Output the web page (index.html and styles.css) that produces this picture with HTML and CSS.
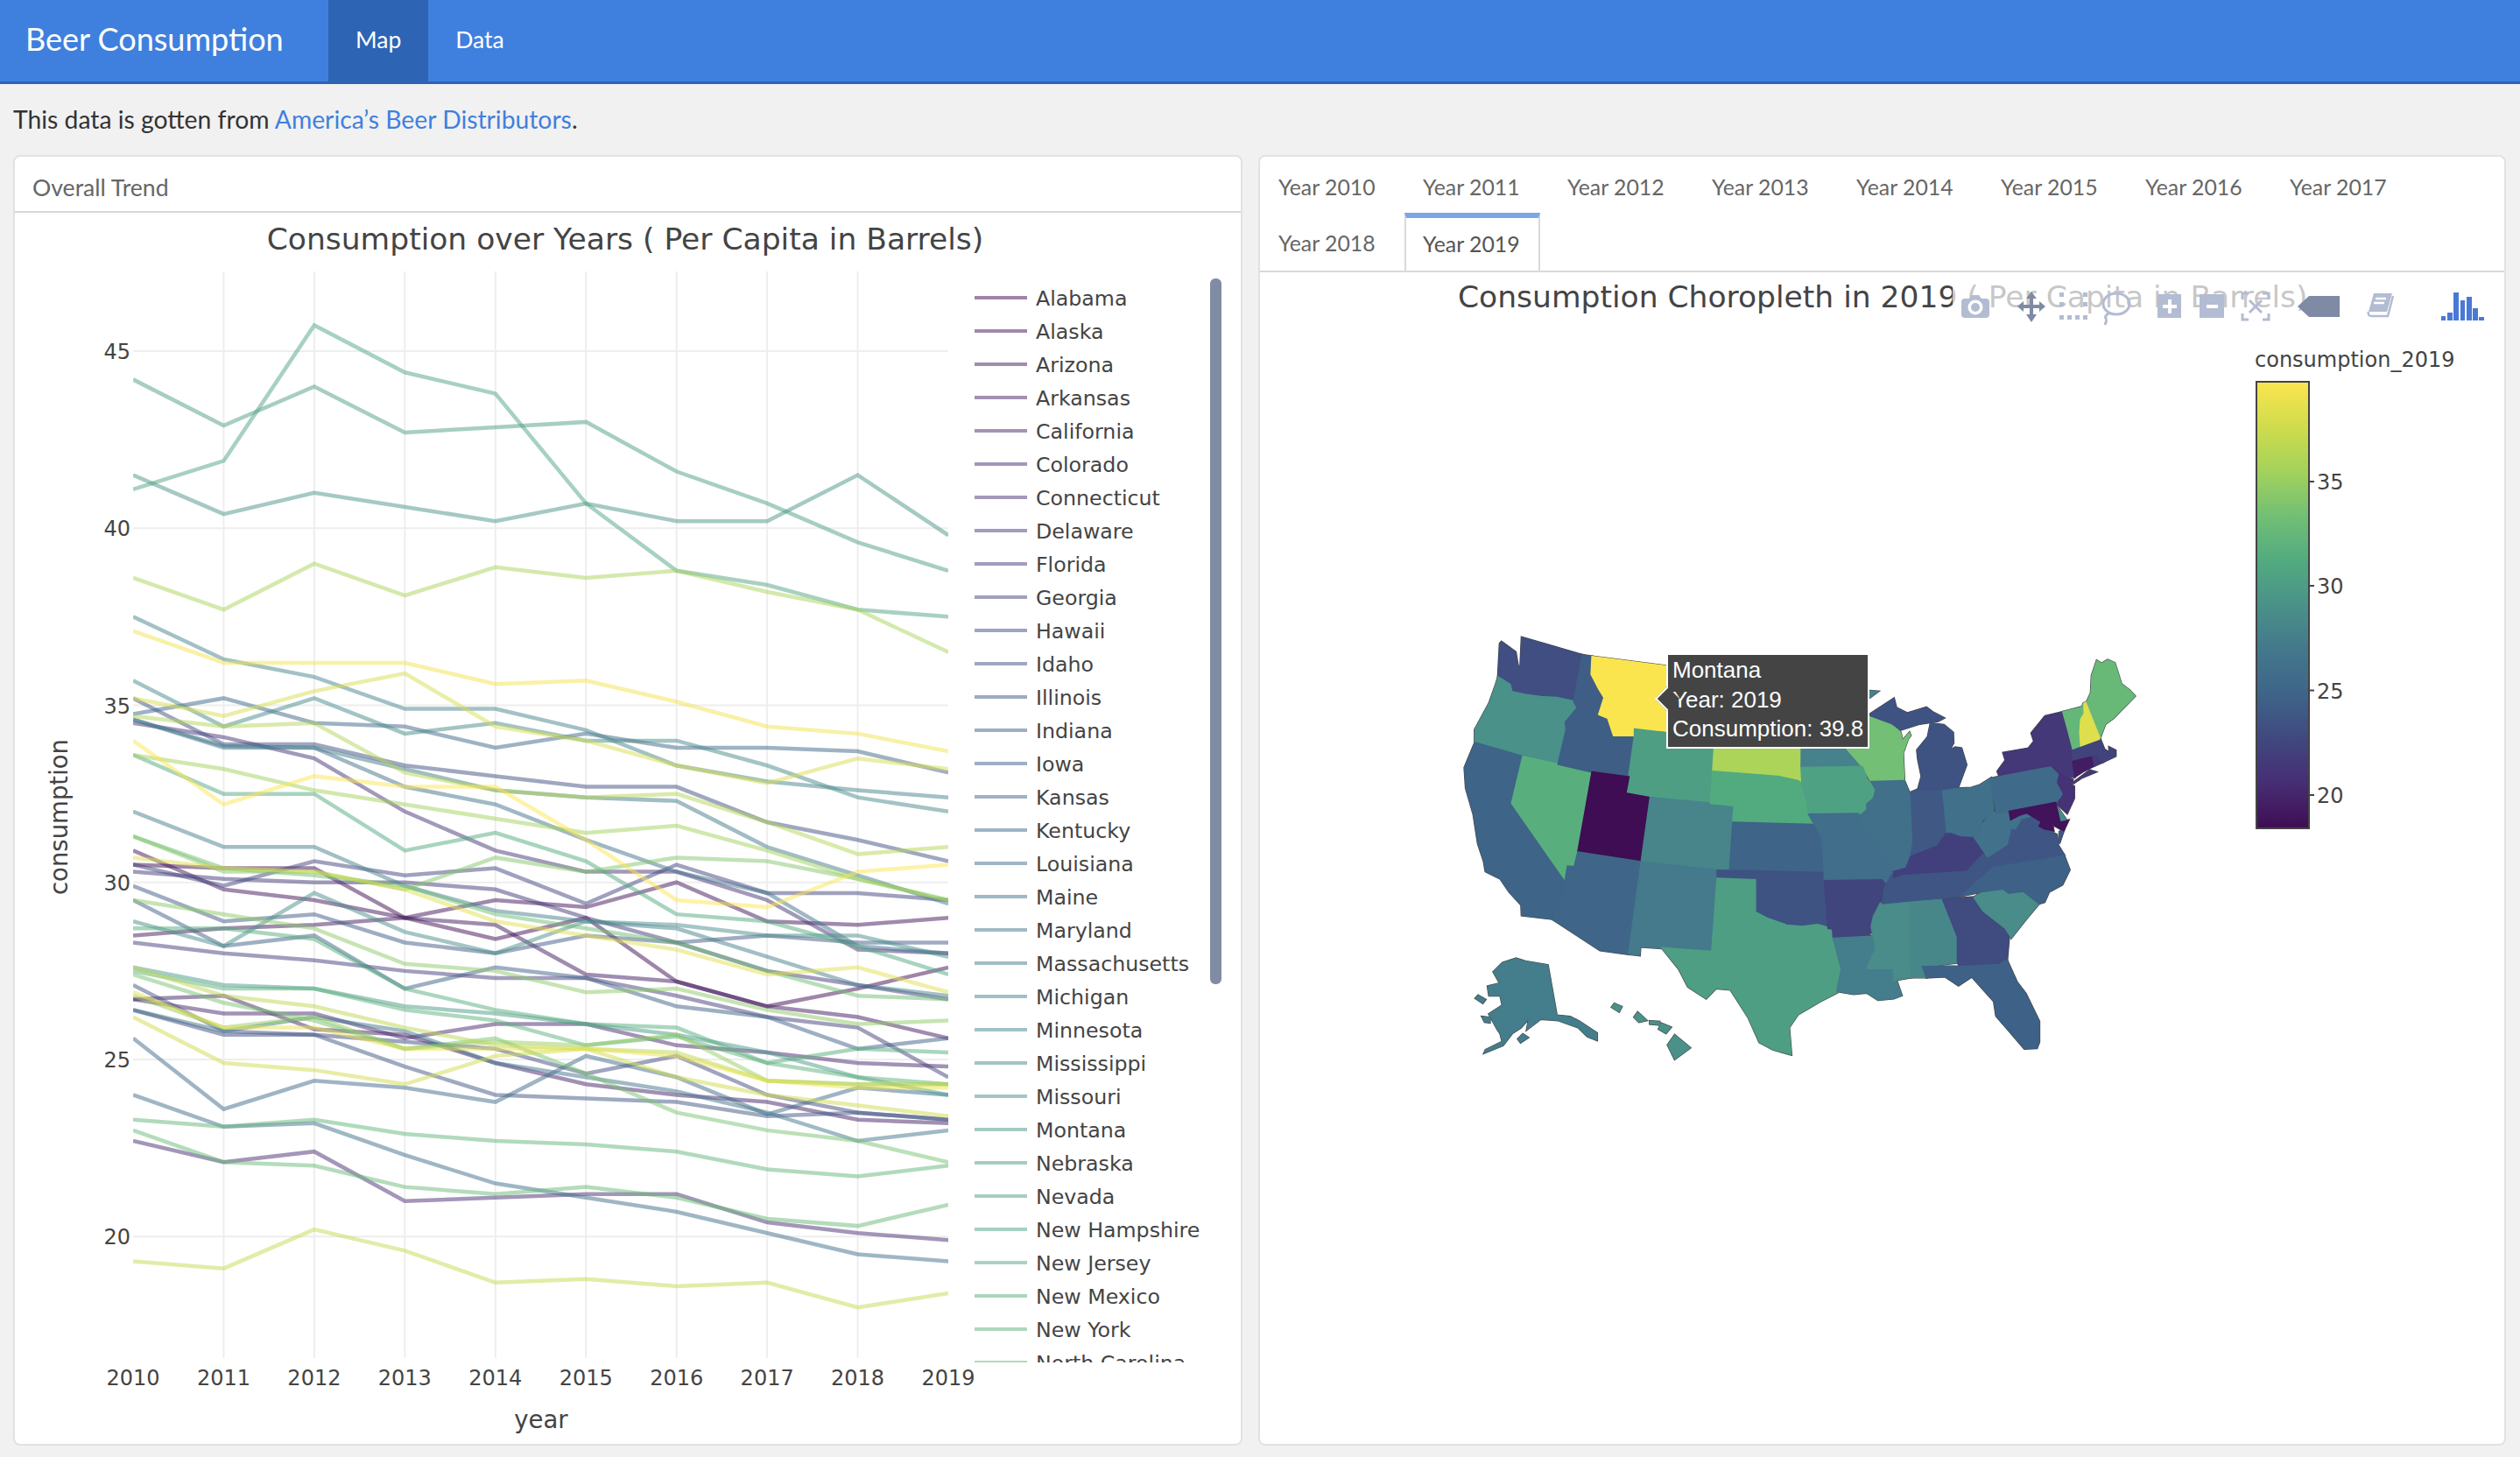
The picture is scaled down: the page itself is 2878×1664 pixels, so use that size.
FILE: index.html
```html
<!DOCTYPE html>
<html lang="en">
<head>
    <meta charset="UTF-8">
    <title>Beer Consumption</title>
    <link rel="stylesheet" href="styles.css">
</head>
<body>

    <nav class="navbar">
        <span class="brand">Beer Consumption</span>
        <a class="nav-link active">Map</a>
        <a class="nav-link">Data</a>
    </nav>

    <p class="intro">This data is gotten from <a>America’s Beer Distributors</a>.</p>

    <div class="cards">
        <section class="card">
            <div class="card-title">Overall Trend</div>
            <svg id="trend" class="plot" width="1400" height="1406" viewBox="17 243 1400 1406"></svg>
        </section>

        <section class="card card-map">
            <ul class="tabs">
                <li>Year 2010</li>
                <li>Year 2011</li>
                <li>Year 2012</li>
                <li>Year 2013</li>
                <li>Year 2014</li>
                <li>Year 2015</li>
                <li>Year 2016</li>
                <li>Year 2017</li>
                <li>Year 2018</li>
                <li class="active">Year 2019</li>
            </ul>

            <svg id="choropleth" class="plot" width="1421" height="1340" viewBox="1439 311 1421 1340">
                <defs>
                    <linearGradient id="viridis-bar" x1="0" y1="1" x2="0" y2="0"></linearGradient>
                </defs>
                <text class="plot-title" x="1665" y="351">Consumption Choropleth in 2019 ( Per Capita in Barrels)</text>
                <svg id="states" x="1650" y="700" width="800" height="520" viewBox="0 0 1568 1560" preserveAspectRatio="none"></svg>
                <text class="axis-text" x="2575" y="419">consumption_2019</text>
                <g id="colorbar"></g>

                <!-- modebar -->
                <rect x="2230" y="318" width="624" height="54" fill="#fff" fill-opacity="0.7"/>
                <g class="tool">
                    <path d="M2240 345a4 4 0 0 1 4-4h5l3-4h8l3 4h5a4 4 0 0 1 4 4v14a4 4 0 0 1-4 4h-24a4 4 0 0 1-4-4z"/>
                    <circle cx="2256" cy="351" r="8.5" fill="#fff"/>
                    <circle cx="2256" cy="351" r="5"/>
                </g>
                <path class="tool-on" d="M2320 333l6 8h-4v7h7v-4l7 6-7 6v-4h-7v7h4l-6 9-6-9h4v-7h-7v4l-7-6 7-6v4h7v-7h-4z"/>
                <g class="tool">
                    <path d="M2352 334h5v5h-5zM2379 334h5v5h-5zM2352 345h5v5h-5zM2379 345h5v5h-5zM2352 360h5v5h-5zM2361 360h5v5h-5zM2370 360h5v5h-5zM2379 360h5v5h-5z"/>
                </g>
                <g class="tool-line">
                    <ellipse cx="2417" cy="347" rx="15" ry="12"/>
                    <path d="M2410 357c-5 2-7 5-4 8M2406 365l-2 6"/>
                </g>
                <g class="tool">
                    <rect x="2464" y="336" width="27" height="27"/>
                    <path fill="#fff" d="M2476 342h4v6h6v4h-6v6h-4v-6h-6v-4h6z"/>
                </g>
                <g class="tool">
                    <rect x="2512" y="336" width="28" height="27"/>
                    <rect fill="#fff" x="2520" y="348" width="13" height="4"/>
                </g>
                <g class="tool-line">
                    <path d="M2561 342v-7h7M2584 335h7v7M2591 358v7h-7M2568 365h-7v-7M2569 343l14 14M2583 343l-14 14"/>
                </g>
                <path class="tool-on" d="M2624 350l13-12h35v24h-35z"/>
                <g class="tool">
                    <path d="M2711 335h21l-6 21h-21z"/>
                    <path class="tool-cut" d="M2705 359l22 0M2713 341h12M2711 346h12"/>
                    <path class="tool-edge" d="M2705 356c-1 3 0 5 4 5h18l6-23"/>
                </g>
                <g class="logo">
                    <rect x="2788" y="361" width="5" height="5"/>
                    <rect x="2795" y="357" width="6" height="9"/>
                    <rect x="2802" y="334" width="6" height="32"/>
                    <rect x="2810" y="343" width="5" height="23"/>
                    <rect x="2817" y="339" width="6" height="27"/>
                    <rect x="2824" y="352" width="6" height="14"/>
                    <rect x="2831" y="362" width="6" height="4"/>
                </g>
            </svg>

            <div class="hover-tip">
                <div>Montana</div>
                <div>Year: 2019</div>
                <div>Consumption: 39.8</div>
            </div>
        </section>
    </div>

    <script src="script.js"></script>
</body>
</html>
```

FILE: styles.css
```css
* {
    box-sizing: border-box;
}

body {
    margin: 0;
    background: #f1f1f1;
    color: #333;
    font-family: Lato, "Open Sans", sans-serif;
    font-size: 26px;
}

.navbar {
    display: flex;
    align-items: stretch;
    height: 96px;
    padding-left: 29px;
    background: #3f80de;
    border-bottom: 3px solid #2d64b4;
    color: #fff;
}

.brand {
    width: 346px;
    font-size: 36px;
    line-height: 88px;
}

.nav-link {
    padding: 0 31px;
    font-size: 26.5px;
    line-height: 91px;
}

.nav-link.active {
    background: #2d64b4;
}

.intro {
    height: 81px;
    margin: 0;
    padding: 20px 15px 0;
    font-size: 28.3px;
    line-height: 40px;
}

.intro a {
    color: #3f80de;
}

.cards {
    display: grid;
    grid-template-columns: 1404px 1425px;
    gap: 18px;
    padding-left: 15px;
}

.card {
    height: 1474px;
    background: #fff;
    border: 2px solid #e2e2e2;
    border-radius: 8px;
    overflow: hidden;
}

.card-map {
    position: relative;
}

.card-title {
    height: 64px;
    padding: 0 20px;
    border-bottom: 2px solid #d9d9d9;
    color: #666;
    font-size: 26.6px;
    line-height: 70px;
}

.plot {
    display: block;
}

.plot text {
    font-family: "DejaVu Sans", sans-serif;
    fill: #444;
}

.plot-title {
    font-size: 34.5px;
}

.axis-text {
    font-size: 24px;
}

.axis-title {
    font-size: 27.5px;
}

.legend-text {
    font-size: 23.7px;
}

.tabs {
    display: flex;
    flex-wrap: wrap;
    height: 132px;
    margin: 0;
    padding: 0;
    border-bottom: 2px solid #d9d9d9;
    list-style: none;
    color: #666;
    font-size: 24.8px;
}

.tabs li {
    width: 155px;
    height: 64px;
    margin-right: 10px;
    padding-left: 21px;
    line-height: 69px;
}

.tabs .active {
    height: 66px;
    padding-left: 19px;
    background: #fff;
    border: 2px solid #d9d9d9;
    border-top: 6px solid #7aa7e8;
    border-bottom: 0;
    color: #555;
    line-height: 59px;
}

.tool {
    fill: #b2bcd2;
}

.tool-on {
    fill: #7f8aa4;
}

.tool-line {
    fill: none;
    stroke: #b2bcd2;
    stroke-width: 3;
}

.tool-cut {
    fill: none;
    stroke: #fff;
    stroke-width: 2.5;
}

.tool-edge {
    fill: none;
    stroke: #b2bcd2;
    stroke-width: 2.5;
}

.logo {
    fill: #4a78d5;
}

.hover-tip {
    position: absolute;
    left: 464px;
    top: 567px;
    width: 232px;
    height: 109px;
    padding: 1px 0 0 5px;
    background: #444;
    border: 2px solid #fff;
    color: #fff;
    font-family: "Liberation Sans", sans-serif;
    font-size: 26px;
    line-height: 33.5px;
    white-space: nowrap;
}

.hover-tip::before {
    content: "";
    position: absolute;
    left: -11px;
    top: 40px;
    width: 18px;
    height: 18px;
    background: #444;
    border-left: 2px solid #fff;
    border-bottom: 2px solid #fff;
    transform: rotate(45deg);
}
```

FILE: script.js
```js
const SVG_NS = "http://www.w3.org/2000/svg";

function el(parent, name, attrs, text) {
    const node = document.createElementNS(SVG_NS, name);
    for (const key in attrs) node.setAttribute(key, attrs[key]);
    if (text !== undefined) node.textContent = text;
    parent.appendChild(node);
    return node;
}

// viridis as it looks on the colorbar
const viridis = ["#3f0d53", "#472d74", "#40487f", "#3e6488", "#43788c", "#4a9189", "#52ab7f", "#72bf75", "#a3d25b", "#d0dc4c", "#fbe54f"];

function mix(stops, t) {
    const pos = Math.min(Math.max(t, 0), 1) * (stops.length - 1);
    const i = Math.min(Math.floor(pos), stops.length - 2);
    const f = pos - i;
    const a = parseInt(stops[i].slice(1), 16);
    const b = parseInt(stops[i + 1].slice(1), 16);
    const part = shift => Math.round(((a >> shift) & 255) * (1 - f) + ((b >> shift) & 255) * f);
    return `rgb(${part(16)},${part(8)},${part(0)})`;
}

const consumption = [
    ["Alabama", [30.5, 30.4, 30.4, 29.0, 28.4, 29.0, 27.2, 26.5, 27.0, 27.6]],
    ["Alaska", [30.9, 29.8, 29.5, 29.0, 29.5, 29.3, 30.0, 28.9, 28.8, 29.0]],
    ["Arizona", [28.5, 28.7, 28.8, 29.0, 28.8, 27.4, 27.2, 26.5, 26.2, 25.6]],
    ["Arkansas", [26.7, 26.8, 25.85, 25.7, 24.9, 24.3, 24.0, 23.8, 23.3, 23.2]],
    ["California", [26.7, 26.3, 26.3, 25.6, 26.0, 26.0, 25.4, 25.2, 24.9, 24.8]],
    ["Colorado", [22.7, 22.1, 22.4, 21.0, 21.1, 21.2, 21.2, 20.4, 20.1, 19.9]],
    ["Connecticut", [34.5, 34.1, 33.5, 32.0, 30.9, 30.3, 30.3, 29.5, 28.1, 28.0]],
    ["Delaware", [30.3, 30.1, 30.0, 30.0, 29.8, 29.0, 28.3, 27.5, 27.1, 26.7]],
    ["Florida", [28.3, 28.0, 27.8, 27.5, 27.3, 27.3, 26.8, 26.2, 25.9, 24.5]],
    ["Georgia", [30.5, 29.9, 30.6, 30.2, 30.4, 29.4, 30.5, 29.7, 29.7, 29.5]],
    ["Hawaii", [26.4, 25.7, 25.7, 25.5, 25.3, 24.6, 25.1, 24.0, 23.5, 23.3]],
    ["Idaho", [35.2, 33.9, 33.9, 33.3, 33.0, 32.7, 32.7, 31.7, 31.2, 30.6]],
    ["Illinois", [27.1, 25.8, 25.7, 24.8, 24.0, 23.9, 23.8, 23.4, 23.5, 23.3]],
    ["Indiana", [29.9, 28.9, 29.1, 28.3, 28.0, 28.5, 28.3, 28.5, 28.3, 28.3]],
    ["Iowa", [29.5, 28.2, 28.5, 27.0, 27.6, 27.3, 26.5, 26.2, 25.3, 25.6]],
    ["Kansas", [34.75, 35.2, 34.5, 34.4, 33.8, 34.2, 33.8, 33.8, 33.7, 33.1]],
    ["Kentucky", [25.6, 23.6, 24.4, 24.2, 23.8, 25.1, 24.5, 23.45, 24.2, 24.0]],
    ["Louisiana", [24.0, 23.1, 23.2, 22.3, 21.5, 21.1, 20.7, 20.1, 19.5, 19.3]],
    ["Maine", [34.6, 33.85, 33.8, 32.7, 32.2, 31.2, 30.3, 29.7, 28.2, 28.0]],
    ["Maryland", [26.4, 25.8, 26.2, 25.8, 24.9, 24.5, 24.1, 23.5, 22.7, 23.0]],
    ["Massachusetts", [34.6, 33.8, 33.8, 33.2, 32.6, 32.4, 32.3, 31.0, 30.2, 29.4]],
    ["Michigan", [32.0, 31.0, 31.0, 29.9, 29.2, 28.9, 28.7, 27.9, 27.1, 26.8]],
    ["Minnesota", [37.5, 36.3, 35.8, 34.9, 34.9, 34.3, 33.3, 32.85, 32.6, 32.4]],
    ["Mississippi", [35.7, 34.4, 35.2, 34.2, 34.5, 34.0, 34.0, 33.3, 32.4, 32.0]],
    ["Missouri", [28.9, 28.2, 29.7, 28.6, 28.0, 28.9, 28.8, 28.5, 28.5, 27.9]],
    ["Montana", [41.5, 40.4, 41.0, 40.6, 40.2, 40.7, 40.2, 40.2, 41.5, 39.8]],
    ["Nebraska", [27.6, 27.1, 27.0, 26.5, 26.3, 26.0, 25.7, 25.2, 24.5, 24.0]],
    ["Nevada", [44.2, 42.9, 44.0, 42.7, 42.85, 43.0, 41.6, 40.7, 39.6, 38.8]],
    ["New Hampshire", [41.1, 41.9, 45.73, 44.4, 43.8, 40.7, 38.8, 38.4, 37.7, 37.5]],
    ["New Jersey", [33.6, 32.5, 32.5, 30.9, 31.4, 30.6, 29.1, 28.9, 28.2, 27.4]],
    ["New Mexico", [28.7, 28.7, 28.4, 27.0, 26.4, 26.0, 25.9, 24.9, 25.3, 25.2]],
    ["New York", [27.5, 27.0, 27.0, 26.4, 26.1, 25.4, 25.65, 24.9, 24.5, 24.3]],
    ["North Carolina", [23.3, 23.1, 23.3, 22.9, 22.7, 22.6, 22.4, 21.9, 21.7, 22.0]],
    ["North Dakota", [23.0, 22.1, 22.0, 21.4, 21.2, 21.4, 21.1, 20.5, 20.3, 20.9]],
    ["Ohio", [31.3, 30.4, 30.2, 29.9, 29.1, 28.7, 28.3, 27.5, 26.8, 26.7]],
    ["Oklahoma", [27.4, 26.6, 26.1, 25.3, 25.6, 24.6, 23.5, 23.0, 22.7, 22.1]],
    ["Oregon", [31.3, 30.3, 30.3, 29.8, 30.7, 30.3, 30.7, 30.6, 30.1, 29.5]],
    ["Pennsylvania", [29.5, 29.1, 28.7, 27.7, 27.5, 26.9, 27.0, 26.4, 26.0, 26.1]],
    ["Rhode Island", [26.8, 25.9, 26.2, 25.3, 25.5, 25.4, 25.7, 24.4, 24.3, 24.3]],
    ["South Carolina", [33.6, 33.2, 32.6, 32.2, 31.8, 31.4, 31.6, 30.9, 30.1, 29.5]],
    ["South Dakota", [38.6, 37.7, 39.0, 38.1, 38.9, 38.6, 38.8, 38.2, 37.7, 36.5]],
    ["Tennessee", [34.7, 34.4, 34.5, 33.1, 32.6, 32.4, 32.5, 31.7, 30.8, 31.0]],
    ["Texas", [27.6, 26.8, 26.5, 25.9, 25.4, 25.3, 25.2, 24.4, 24.3, 24.3]],
    ["Utah", [19.3, 19.1, 20.2, 19.6, 18.7, 18.8, 18.6, 18.7, 18.0, 18.4]],
    ["Vermont", [26.2, 24.9, 24.7, 24.3, 25.1, 25.3, 24.5, 24.0, 23.7, 23.4]],
    ["Virginia", [35.2, 34.7, 35.4, 35.9, 34.4, 34.0, 33.3, 32.8, 33.5, 33.2]],
    ["Washington", [30.7, 30.4, 30.3, 29.8, 28.9, 28.5, 28.1, 27.4, 27.6, 26.9]],
    ["West Virginia", [26.9, 25.9, 25.9, 25.3, 25.3, 25.3, 25.1, 24.4, 24.2, 24.2]],
    ["Wisconsin", [37.1, 36.2, 36.2, 36.2, 35.6, 35.7, 35.1, 34.4, 34.2, 33.7]],
    ["Wyoming", [34.0, 32.2, 33.0, 32.7, 32.7, 31.2, 29.5, 29.3, 30.3, 30.5]]
];

// trend chart, drawn in page pixels
function drawTrend() {
    const svg = document.getElementById("trend");
    const xOf = i => 152 + i * 103.45;
    const yOf = v => 401 + (45 - v) * 40.45;

    const defs = el(svg, "defs", {});
    el(el(defs, "clipPath", { id: "plot-clip" }), "rect", { x: 152, y: 310, width: 931, height: 1241 });
    el(el(defs, "clipPath", { id: "legend-clip" }), "rect", { x: 1100, y: 318, width: 280, height: 1238 });

    for (let i = 1; i < 9; i++) {
        el(svg, "line", { x1: xOf(i), x2: xOf(i), y1: 310, y2: 1551, stroke: "#eee", "stroke-width": 2 });
    }
    for (let v = 20; v <= 45; v += 5) {
        el(svg, "line", { x1: 152, x2: 1083, y1: yOf(v), y2: yOf(v), stroke: "#eee", "stroke-width": 2 });
        el(svg, "text", { class: "axis-text", x: 149, y: yOf(v) + 9, "text-anchor": "end" }, v);
    }
    for (let i = 0; i < 10; i++) {
        el(svg, "text", { class: "axis-text", x: xOf(i), y: 1582, "text-anchor": "middle" }, 2010 + i);
    }

    const lines = el(svg, "g", { "clip-path": "url(#plot-clip)" });
    const legend = el(svg, "g", { "clip-path": "url(#legend-clip)" });
    consumption.forEach(([name, values], n) => {
        const color = mix(viridis, n / 49);
        const points = values.map((v, i) => `${xOf(i)},${yOf(v)}`).join(" ");
        el(lines, "polyline", { points, fill: "none", stroke: color, "stroke-opacity": 0.5, "stroke-width": 4.5 });

        if (n > 32) return;
        const y = 340 + n * 38;
        el(legend, "line", { x1: 1113, x2: 1173, y1: y, y2: y, stroke: color, "stroke-opacity": 0.5, "stroke-width": 4 });
        el(legend, "text", { class: "legend-text", x: 1183, y: y + 9 }, name);
    });

    el(svg, "rect", { x: 1382, y: 318, width: 13, height: 806, rx: 6, fill: "#808ba4" });

    el(svg, "text", { class: "plot-title", x: 714, y: 285, "text-anchor": "middle" }, "Consumption over Years ( Per Capita in Barrels)");
    el(svg, "text", { class: "axis-title", x: 618, y: 1631, "text-anchor": "middle" }, "year");
    el(svg, "text", { class: "axis-title", x: 77, y: 933, "text-anchor": "middle", transform: "rotate(-90 77 933)" }, "consumption");
}

// state shapes are traced over the map, t is the place on the colour scale
const states = [
    [0.22, "124,105 127,100 158,135 163,182 170,185 173,85 308,145 289,303 250,290 215,287 180,280 150,270 146,245 125,220 120,220"],
    [0.5, "120,220 146,245 150,270 180,280 215,287 250,290 289,303 297,325 270,375 272,400 254,518 175,492 68,445 68,400 100,310 115,245"],
    [0.3, "68,445 175,492 150,652 270,915 272,962 255,1000 243,1048 173,1035 172,1000 145,955 125,910 92,885 88,850 75,790 65,690 48,600 45,530"],
    [0.62, "175,492 330,545 298,820 290,870 275,868 270,915 150,652"],
    [0.28, "308,145 330,150 328,210 345,260 357,290 345,348 365,360 378,420 425,420 412,562 330,545 254,518 272,400 270,375 297,325 289,303"],
    [1, "330,150 660,215 650,420 425,398 425,420 378,420 365,360 345,348 357,290 345,260 328,210"],
    [0.55, "425,398 605,430 595,652 405,618 412,562 425,420"],
    [0, "330,545 412,562 405,618 460,633 440,853 298,820"],
    [0.45, "460,633 595,652 648,660 640,882 440,853"],
    [0.31, "298,820 440,853 412,1168 348,1155 243,1050 255,1000 272,962 270,915 275,868 290,870"],
    [0.41, "440,853 610,882 610,910 598,1160 487,1148 437,1143 436,1172 412,1168"],
    [0.7, "625,235 800,250 800,445 605,440"],
    [0.82, "605,430 800,450 798,545 800,585 790,575 745,560 600,543"],
    [0.6, "600,543 745,560 790,575 800,585 808,630 815,690 828,725 645,718 648,660 595,652"],
    [0.3, "645,718 828,725 845,770 850,890 638,882"],
    [0.24, "610,882 850,890 858,1080 835,1068 800,1075 765,1070 720,1045 695,1025 695,915 610,910"],
    [0.55, "610,910 695,915 695,1025 720,1045 765,1070 800,1075 835,1068 868,1082 870,1115 888,1220 878,1300 840,1330 790,1375 770,1420 775,1512 735,1495 705,1470 680,1385 640,1290 607,1285 585,1320 545,1280 525,1220 487,1148 598,1160"],
    [0.44, "800,250 968,270 950,290 905,340 905,440 900,465 935,527 798,530"],
    [0.7, "950,350 1000,378 1020,410 1025,450 1040,415 1025,480 1028,575 955,578 935,527 900,465 905,440 905,340"],
    [0.7, "1018,450 1040,412 1042,420 1025,452"],
    [0.56, "798,530 935,527 945,570 965,605 960,635 945,655 945,675 930,695 925,688 815,690 808,630 800,585"],
    [0.35, "815,690 925,688 930,695 935,730 970,790 975,820 1005,880 1000,900 985,940 975,915 850,918 850,890 845,770 828,725"],
    [0.19, "850,918 978,915 990,935 965,1020 955,1060 950,1108 870,1115 868,1082 858,1080"],
    [0.42, "870,1115 962,1108 965,1150 945,1215 1005,1218 1012,1265 1022,1310 1005,1320 970,1325 945,1300 915,1305 878,1295 888,1220"],
    [0.48, "975,995 1043,990 1045,1248 1005,1258 1005,1218 945,1218 965,1150 955,1075 960,1040"],
    [0.46, "1043,990 1115,982 1148,1110 1148,1197 1070,1212 1078,1248 1045,1248"],
    [0.21, "1115,982 1185,975 1205,1020 1255,1080 1262,1115 1258,1190 1240,1212 1155,1212 1148,1197 1148,1110"],
    [0.29, "1070,1212 1155,1212 1240,1205 1258,1190 1280,1265 1300,1305 1330,1400 1330,1470 1325,1490 1298,1492 1280,1460 1235,1380 1230,1330 1180,1245 1150,1275 1120,1245 1078,1248"],
    [0.48, "1185,975 1205,955 1250,945 1262,960 1295,953 1330,995 1300,1050 1268,1112 1255,1080 1205,1020"],
    [0.29, "1385,828 1398,880 1382,930 1352,955 1342,990 1330,995 1295,953 1262,960 1250,945 1200,955 1152,970 1190,915 1222,872"],
    [0.25, "1005,905 1025,895 1173,880 1222,872 1190,915 1152,970 980,995 985,940 1000,900"],
    [0.17, "1005,880 1030,870 1045,830 1100,795 1120,750 1134,751 1156,763 1186,765 1215,835 1173,880 1025,895 1005,905"],
    [0.25, "1310,690 1336,715 1331,730 1342,740 1369,760 1372,795 1385,828 1173,880 1205,827 1215,835 1258,793 1267,735 1277,740 1290,705"],
    [0.25, "1385,745 1375,790 1377,750"],
    [0.37, "1235,687 1264,680 1267,708 1287,692 1303,685 1313,695 1290,705 1277,740 1267,735 1258,793 1215,835 1186,770 1196,740 1225,680"],
    [0.36, "1111,605 1179,600 1199,590 1222,568 1228,678 1202,712 1196,765 1156,763 1134,751 1120,750"],
    [0.26, "1040,618 1060,605 1111,605 1120,750 1100,795 1040,830 1045,780"],
    [0.36, "955,578 1028,575 1040,618 1045,780 1040,830 1030,870 1005,880 975,820 970,790 935,730 930,695 945,675 945,655 960,635 965,605"],
    [0.24, "1088,380 1117,385 1137,410 1138,445 1127,475 1143,462 1156,465 1167,520 1149,595 1111,605 1060,605 1068,560 1060,500 1058,470 1082,425"],
    [0.24, "950,350 1005,295 1010,325 1035,345 1078,325 1091,340 1116,360 1104,370 1060,380 1020,400 1000,378"],
    [0.33, "1223,568 1357,522 1377,552 1372,580 1386,620 1367,648 1235,687"],
    [0.14, "1344,355 1384,340 1395,400 1406,465 1405,505 1409,562 1377,552 1357,522 1241,555 1238,543 1256,505 1251,480 1307,465 1320,440 1314,412"],
    [0.14, "1405,585 1444,540 1455,545 1424,565"],
    [0.12, "1377,552 1405,572 1401,590 1408,595 1408,635 1393,685 1372,655 1386,620 1372,580"],
    [0.47, "1364,650 1391,710 1377,718 1369,680"],
    [0.02, "1264,680 1367,650 1377,718 1395,712 1385,745 1365,728 1355,692 1362,745 1342,740 1331,730 1336,715 1303,685 1287,692 1267,708"],
    [0.05, "1406,510 1450,490 1455,522 1431,540 1411,560"],
    [0.15, "1450,487 1460,483 1473,510 1455,522"],
    [0.18, "1404,468 1466,430 1476,468 1489,482 1488,462 1501,472 1501,490 1473,510 1460,483 1450,487 1406,502"],
    [0.66, "1384,340 1427,323 1431,310 1432,345 1424,365 1422,410 1424,455 1406,465 1395,400"],
    [0.93, "1431,310 1438,305 1468,420 1465,432 1424,455 1422,410 1424,365 1432,345"],
    [0.67, "1460,165 1470,175 1484,162 1499,172 1514,245 1532,265 1544,285 1496,360 1478,380 1468,420 1438,305 1447,275 1449,215"],
    [0.42, "160,1185 180,1195 230,1208 250,1380 280,1385 300,1400 340,1440 340,1462 320,1450 300,1420 255,1395 215,1390 185,1425 190,1385 170,1420 150,1440 130,1480 90,1505 92,1498 130,1470 125,1440 120,1430 100,1375 130,1345 125,1310 100,1310 97,1280 125,1270 110,1230 130,1200"],
    [0.42, "75,1312 90,1325 85,1335 70,1320"],
    [0.42, "85,1385 100,1388 100,1402 90,1400"],
    [0.42, "175,1445 185,1455 170,1470 165,1460"],
    [0.5, "380,1340 395,1350 390,1365 375,1350"],
    [0.5, "432,1370 450,1395 435,1400 425,1385"],
    [0.5, "460,1400 480,1402 480,1410 460,1407"],
    [0.5, "485,1408 505,1420 495,1438 480,1425"],
    [0.5, "515,1448 548,1490 515,1527 500,1480"]
];

function drawMap() {
    const svg = document.getElementById("states");
    // outline first, then the fills again so only the outer edge keeps its dark line
    states.forEach(([t, points]) => {
        el(svg, "polygon", { points, fill: "#444", stroke: "#444", "stroke-width": 3.2, "vector-effect": "non-scaling-stroke" });
    });
    states.forEach(([t, points]) => {
        const color = mix(viridis, t);
        el(svg, "polygon", { points, fill: color, stroke: color, "stroke-width": 2, "vector-effect": "non-scaling-stroke" });
    });
}

function drawColorbar() {
    const grad = document.getElementById("viridis-bar");
    viridis.forEach((stop, i) => {
        el(grad, "stop", { offset: i / 10, "stop-color": stop });
    });

    const bar = document.getElementById("colorbar");
    el(bar, "rect", { x: 2577, y: 436, width: 60, height: 510, fill: "url(#viridis-bar)", stroke: "#444", "stroke-width": 2 });
    [[35, 550], [30, 669], [25, 788.5], [20, 908]].forEach(([label, y]) => {
        el(bar, "line", { x1: 2637, x2: 2643, y1: y, y2: y, stroke: "#444", "stroke-width": 2 });
        el(bar, "text", { class: "axis-text", x: 2646, y: y + 9 }, label);
    });
}

drawTrend();
drawMap();
drawColorbar();
```
